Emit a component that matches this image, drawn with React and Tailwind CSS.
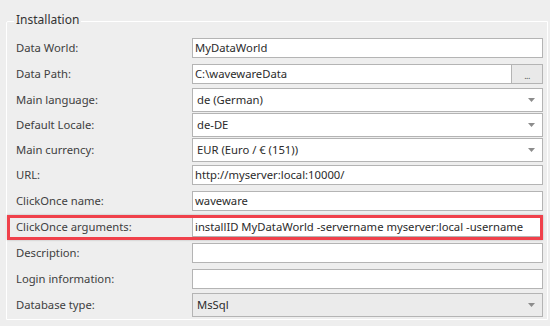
const LABEL_W = 'w-[176px]'

function TextRow({ label, value }) {
  return (
    <div className="flex items-center h-[26px]">
      <div className={`${LABEL_W} shrink-0 text-[#404040]`}>{label}</div>
      <div className="flex-1 h-[20px] bg-white border border-[#b4b4b4] flex items-center px-[2px] text-[#2b2b2b] whitespace-nowrap overflow-hidden">
        {value}
      </div>
    </div>
  )
}

function ComboRow({ label, value, disabled }) {
  return (
    <div className="flex items-center h-[25px]">
      <div className={`${LABEL_W} shrink-0 text-[#404040]`}>{label}</div>
      <div
        className={`flex-1 h-[24px] border border-[#b4b4b4] flex items-center pl-[4px] pr-[7px] text-[#2b2b2b] ${
          disabled ? 'bg-[#ebebeb]' : 'bg-white'
        }`}
      >
        <span className="flex-1 whitespace-nowrap">{value}</span>
        <svg width="7" height="4" viewBox="0 0 7 4">
          <path d="M0 0 L7 0 L3.5 4 Z" fill="#8c8c8c" />
        </svg>
      </div>
    </div>
  )
}

export default function App() {
  return (
    <div className="w-[550px] h-[326px] overflow-hidden bg-[#eeeeee] font-['Noto_Sans',sans-serif] text-[11.25px] leading-none">
      <div className="pt-[21px] pl-[6px] pr-[2px]">
        {/* Installation group */}
        <div className="relative border border-white rounded-tl-[2px] pl-[9px] pr-[4px] pt-[13px] pb-[2px]">
          <span className="absolute -top-[8px] left-[7px] bg-[#eeeeee] px-[2px] text-[12px] text-[#333333]">
            Installation
          </span>

          <TextRow label="Data World:" value="MyDataWorld" />

          {/* Data Path with browse button */}
          <div className="flex items-center h-[26px]">
            <div className={`${LABEL_W} shrink-0 text-[#404040]`}>Data Path:</div>
            <div className="flex-1 h-[20px] bg-white border border-[#b4b4b4] flex items-center px-[2px] text-[#2b2b2b]">
              C:\wavewareData
            </div>
            <div className="w-[31px] h-[20px] bg-[#e9e9e9] border border-l-0 border-[#b4b4b4] flex items-end justify-center pb-[3px] text-[9px] text-[#555] tracking-[-0.5px]">
              ...
            </div>
          </div>

          <ComboRow label="Main language:" value="de (German)" />
          <ComboRow label="Default Locale:" value="de-DE" />
          <ComboRow label="Main currency:" value="EUR (Euro / € (151))" />

          <TextRow label="URL:" value="http://myserver:local:10000/" />
          <TextRow label="ClickOnce name:" value="waveware" />

          {/* highlighted row */}
          <div className="relative">
            <TextRow
              label="ClickOnce arguments:"
              value="installID MyDataWorld -servername myserver:local -username"
            />
            <div className="absolute -left-[9px] right-0 top-[1px] bottom-0 border-[3px] border-[#f0414b] shadow-[0_0_2px_rgba(0,0,0,0.25)]" />
          </div>

          <TextRow label="Description:" value="" />
          <TextRow label="Login information:" value="" />
          <ComboRow label="Database type:" value="MsSql" disabled />
        </div>

        {/* next group, cut off */}
        <div className="relative mt-[6px] ml-[8px] flex items-center gap-[2px] text-[12px] text-[#333333]">
          <span className="w-[5px] h-px bg-[#333] mt-[6px]" />
          Target Database
        </div>
      </div>
    </div>
  )
}
